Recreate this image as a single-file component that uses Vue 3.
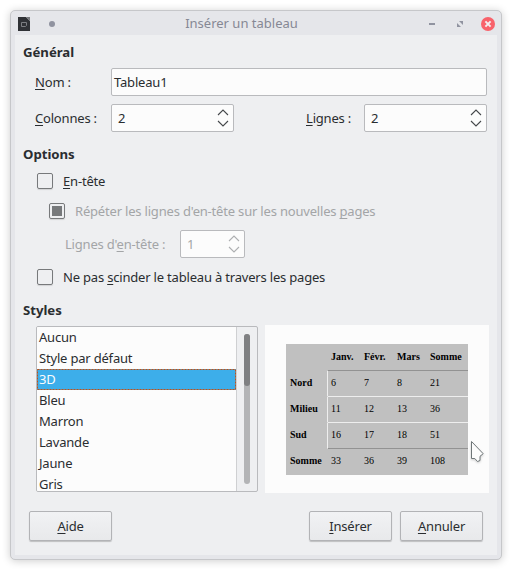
<script setup>
import { ref } from 'vue'

const name = ref('Tableau1')
const styles = ['Aucun', 'Style par défaut', '3D', 'Bleu', 'Marron', 'Lavande', 'Jaune', 'Gris']
const selected = ref('3D')
const header = ['', 'Janv.', 'Févr.', 'Mars', 'Somme']
const rows = [
  ['Nord', 6, 7, 8, 21],
  ['Milieu', 11, 12, 13, 36],
  ['Sud', 16, 17, 18, 51],
  ['Somme', 33, 36, 39, 108],
]
</script>

<template>
  <div class="desktop">
    <div class="window">
      <header class="titlebar">
        <svg class="app-icon" width="12" height="14" viewBox="0 0 12 14">
          <path d="M0 0H8L12 4V14H0Z" fill="#303236" />
          <path d="M8 0H12V4Z" fill="#77797d" />
          <path d="M3.5 5.5H8.5V8.5L7.5 9.5H3.5Z" fill="none" stroke="#7d7f83" />
        </svg>
        <span class="pin"></span>
        <span class="title">Insérer un tableau</span>
        <svg class="minimize" width="6" height="2" viewBox="0 0 6 2"><rect width="6" height="2" fill="#9093a0" /></svg>
        <svg class="maximize" width="6" height="6" viewBox="0 0 6 6">
          <path d="M2 0H6V4ZM0 2L4 6H0Z" fill="#9093a0" />
        </svg>
        <svg class="close" width="14" height="14" viewBox="0 0 14 14">
          <circle cx="7" cy="7" r="7" fill="#f8626b" />
          <path d="M4.4 4.4L9.6 9.6M9.6 4.4L4.4 9.6" stroke="#f3eef0" stroke-width="2" />
        </svg>
      </header>

      <main class="body">
        <h2>Général</h2>
        <div class="row name-row">
          <label class="field-label"><u>N</u>om :</label>
          <div class="input">{{ name }}</div>
        </div>
        <div class="row size-row">
          <label class="field-label"><u>C</u>olonnes :</label>
          <div class="spin">
            <span>2</span>
            <svg width="12" height="18" viewBox="0 0 12 18"><path d="M1 6L6 1L11 6M1 12L6 17L11 12" /></svg>
          </div>
          <label class="lines-label"><u>L</u>ignes :</label>
          <div class="spin">
            <span>2</span>
            <svg width="12" height="18" viewBox="0 0 12 18"><path d="M1 6L6 1L11 6M1 12L6 17L11 12" /></svg>
          </div>
        </div>

        <h2 class="options-title">Options</h2>
        <div class="check head-check"><span class="box"></span><span><u>E</u>n-tête</span></div>
        <div class="check repeat-check disabled">
          <span class="box"><i></i></span><span>Répéter les lignes d'en-tête sur les nouvelles <u>p</u>ages</span>
        </div>
        <div class="row header-lines disabled">
          <label>Lignes d'<u>e</u>n-tête :</label>
          <div class="spin small">
            <span>1</span>
            <svg width="12" height="18" viewBox="0 0 12 18"><path d="M1 6L6 1L11 6M1 12L6 17L11 12" /></svg>
          </div>
        </div>
        <div class="check split-check">
          <span class="box"></span><span>Ne pas <u>s</u>cinder le tableau à travers les pages</span>
        </div>

        <h2 class="styles-title">Styles</h2>
        <div class="styles">
          <div class="listbox">
            <ul>
              <li v-for="s in styles" :key="s" :class="{ selected: s === selected }">
                <svg v-if="s === selected" class="focus" width="199" height="21">
                  <rect x=".5" y=".5" width="198" height="20" />
                </svg>{{ s }}
              </li>
            </ul>
            <div class="scroll"><div class="track"><div class="thumb"></div></div></div>
          </div>
          <div class="preview">
            <div class="table">
              <div class="tr"><b v-for="(h, i) in header" :key="i">{{ h }}</b></div>
              <div v-for="r in rows" :key="r[0]" class="tr">
                <b>{{ r[0] }}</b><span v-for="(c, i) in r.slice(1)" :key="i">{{ c }}</span>
              </div>
            </div>
            <svg class="cursor" width="16" height="24" viewBox="0 0 16 24">
              <path d="M1.5 1.5L13.2 13.7L10 16.3V20.5L7.5 21.5L4.8 18.5H1.5Z" />
            </svg>
          </div>
        </div>

        <footer>
          <button class="help"><span><u>A</u>ide</span></button>
          <button><span><u>I</u>nsérer</span></button>
          <button><span><u>A</u>nnuler</span></button>
        </footer>
      </main>
    </div>
  </div>
</template>

<style>
body { background: #fff; }
</style>

<style scoped>
* { box-sizing: border-box; }
.desktop {
  width: 512px;
  height: 570px;
  padding: 10px;
  background: #fff;
  overflow: hidden;
  font: 13px/20px "Noto Sans", sans-serif;
  letter-spacing: -.19px;
  color: #2a2d30;
  white-space: nowrap;
}
.window {
  width: 492px;
  height: 550px;
  border: 1px solid #c6c7ca;
  border-radius: 5px;
  background: #e5e6ea;
  box-shadow: 0 1px 8px rgba(0, 0, 0, .2);
  padding: 0 4px 4px;
}
.titlebar { height: 24px; display: flex; align-items: center; padding: 2px 2px 0 3px; }
.pin { width: 6px; height: 6px; border-radius: 50%; background: #9093a0; margin-left: 19px; }
.title { flex: 1; text-align: center; color: #858894; letter-spacing: 0; position: relative; top: -1.5px; padding-right: 1px; }
.minimize { margin-right: 22px; }
.maximize { margin-right: 18px; }
.body { height: 520px; background: #eeeff1; padding: 7px 8px 0; }
h2 { margin: 0; font-size: 13.2px; line-height: 20px; font-weight: 700; letter-spacing: -.03px; }
u { text-decoration: underline 1px; text-underline-offset: 2px; text-decoration-skip-ink: none; }
.row { display: flex; align-items: center; height: 28px; }
.name-row { margin-top: 6px; padding-left: 12px; }
.size-row { margin-top: 8px; padding-left: 12px; }
.field-label { width: 76px; }
.input {
  width: 376px;
  height: 28px;
  border: 1px solid #b9babd;
  border-radius: 2px;
  background: #fcfcfc;
  padding-left: 2px;
  line-height: 26px;
}
.spin {
  width: 123px;
  height: 28px;
  border: 1px solid #b9babd;
  border-radius: 2px;
  background: #fcfcfc;
  display: flex;
  align-items: center;
  justify-content: space-between;
  padding: 0 4px 0 6px;
}
.spin svg { fill: none; stroke: #45484b; stroke-width: 1.1; }
.lines-label { margin-left: 72px; width: 58px; }
.options-title { margin-top: 12px; }
.check { display: flex; align-items: center; height: 20px; gap: 10px; }
.box {
  width: 16px;
  height: 16px;
  border: 1px solid #77797b;
  border-radius: 2px;
  display: grid;
  place-items: center;
  box-shadow: 0 1px 1px rgba(0, 0, 0, .12);
}
.box i { width: 10px; height: 10px; background: #77797b; }
.head-check { margin-top: 7px; padding-left: 14px; }
.repeat-check { margin-top: 10px; padding-left: 26px; }
.disabled { color: #a3a5a7; }
.header-lines { margin-top: 9px; padding-left: 42px; }
.header-lines label { width: 115px; }
.small { width: 65px; }
.disabled .spin svg { stroke: #adafb1; }
.split-check { margin-top: 9px; padding-left: 14px; }
.styles-title { margin-top: 13px; }
.styles { display: flex; align-items: center; margin-top: 5px; height: 168px; padding-left: 13px; gap: 7px; }
.listbox {
  width: 222px;
  height: 166px;
  border: 1px solid #b9babd;
  border-radius: 2px;
  display: flex;
  overflow: hidden;
}
ul { list-style: none; margin: 0; padding: 0; width: 200px; background: #fcfcfc; border-right: 1px solid #cfd0d2; }
li { height: 21px; line-height: 21px; padding-left: 2px; position: relative; }
.selected { background: #3daeea; color: #fcfcfc; }
.focus { position: absolute; left: 0; top: 0; fill: none; stroke: #c25115; stroke-dasharray: 2 1; }
.scroll { padding: 7px 0 0 7px; }
.track { width: 6px; height: 150px; border-radius: 3px; background: #b3b4b6; }
.thumb { width: 6px; height: 52px; border-radius: 3px; background: #7f8082; }
.preview { width: 224px; height: 168px; background: #fcfcfc; padding: 19px 21px; position: relative; }
.table {
  width: 182px;
  height: 131px;
  background: #c0c0c0;
  font: 10px/23px "Liberation Serif", serif;
  letter-spacing: 0;
  color: #000;
}
.tr { display: grid; grid-template-columns: 42px 33px 33px 33px 41px; height: 26px; }
.tr > * { padding-left: 3px; border-bottom: 1px solid transparent; }
.tr > :first-child { padding-left: 4px; border-right: 1px solid transparent; }
.tr:first-child { height: 27px; }
.tr:first-child > * { line-height: 26px; }
.tr:nth-child(1) > :not(:first-child),
.tr:nth-child(4) > :not(:first-child) { border-bottom-color: #929292; }
.tr:nth-child(2) > :not(:first-child),
.tr:nth-child(3) > :not(:first-child) { border-bottom-color: #eee; }
.tr:nth-child(n+2):nth-child(-n+4) > :first-child { border-right: 1px solid #eee; }
.cursor { position: absolute; left: 205px; top: 115px; fill: #fcfcfc; stroke: #6f7678; filter: drop-shadow(0 1px 1px rgba(0, 0, 0, .2)); }
footer { display: flex; gap: 8px; margin-top: 18px; padding-left: 6px; }
button {
  width: 83px;
  height: 30px;
  padding: 0;
  border: 1px solid #b2b3b6;
  border-radius: 2px;
  background: linear-gradient(#f1f2f4, #e8e9eb);
  box-shadow: 0 1px 1px rgba(0, 0, 0, .2);
  font: inherit;
  letter-spacing: inherit;
  color: inherit;
}
.help { margin-right: 189px; }
</style>
